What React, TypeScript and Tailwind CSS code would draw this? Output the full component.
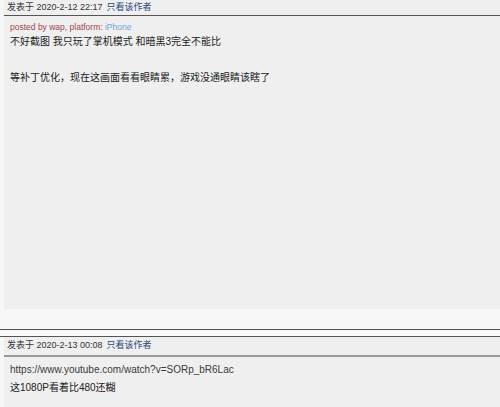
export default function App() {
  const font = { fontFamily: '"Liberation Sans", "Noto Sans CJK SC", sans-serif' };
  return (
    <div className="w-[500px] h-[407px] overflow-hidden bg-[#f7f7f7] text-[#222]" style={font}>
      {/* post 1 */}
      <div className="ml-[4px] bg-[#efefef]">
        <div className="h-[16px] flex items-center pl-[3px] text-[9px] text-[#333] border-b border-[#555]">
          <span>发表于 2020-2-12 22:17</span>
          <a className="ml-[4px] text-[#2a4a7a]">只看该作者</a>
        </div>
        <div className="h-[293px] pl-[6px] pt-[6px]">
          <div className="text-[8.5px] leading-[11px] text-[#a04550]">
            posted by wap, platform: <span className="text-[#6fa3d8]">iPhone</span>
          </div>
          <div className="text-[10px] leading-[18px]">
            不好截图 我只玩了掌机模式 和暗黑3完全不能比
            <br />
            <br />
            等补丁优化，现在这画面看看眼睛累，游戏没通眼睛该瞎了
          </div>
        </div>
      </div>
      <div className="h-[20px]" />
      <div className="h-px bg-[#555]" />
      <div className="h-[6px] bg-[#f9f9f9]" />
      <div className="h-px bg-[#555]" />
      {/* post 2 */}
      <div className="ml-[4px] bg-[#efefef]">
        <div className="h-[18px] flex items-center pl-[3px] text-[9px] text-[#333]">
          <span>发表于 2020-2-13 00:08</span>
          <a className="ml-[4px] text-[#2a4a7a]">只看该作者</a>
        </div>
        <div className="h-[2px] bg-[#9a9a9a]" />
        <div className="pl-[6px] pt-[4px] text-[10px] leading-[18px] h-[60px]">
          <div className="text-[#3a3a3a]">https://www.youtube.com/watch?v=SORp_bR6Lac</div>
          <div>这1080P看着比480还糊</div>
        </div>
      </div>
    </div>
  );
}
